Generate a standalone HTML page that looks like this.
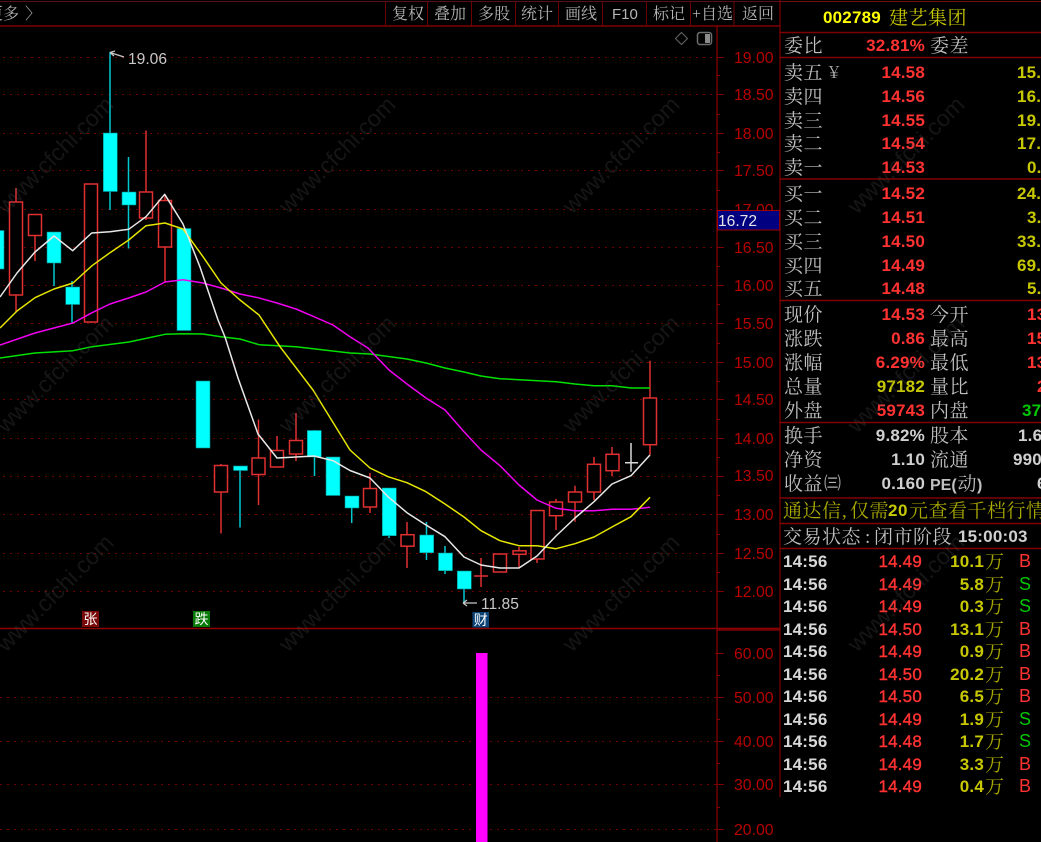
<!DOCTYPE html>
<html lang="zh"><head><meta charset="utf-8"><title>建艺集团</title>
<style>
html,body{margin:0;padding:0;background:#000;width:1041px;height:842px;overflow:hidden}
svg{display:block}
text{white-space:pre}
.c{font-family:"Liberation Serif","Noto Serif CJK SC",serif;font-size:19px;fill:#c0c0c0;letter-spacing:.5px}
.t{font-family:"Liberation Serif","Noto Serif CJK SC",serif;font-size:16px;fill:#b4b4b4}
.n{font-family:"Liberation Sans",sans-serif;font-size:17px;font-weight:bold;letter-spacing:.2px}
.r{fill:#ff3232;text-anchor:end}
.y{fill:#c8c800}
.w{fill:#d0d0d0}
.g{fill:#00c800}
.a{font-family:"Liberation Sans",sans-serif;font-size:15.8px;fill:#b80000}
.l{font-family:"Liberation Sans",sans-serif;font-size:15.6px;fill:#c8c8c8}
.m{font-family:"Noto Sans CJK SC",sans-serif;font-size:14px;fill:#fff;text-anchor:middle}
.wm{font-family:"Liberation Sans",sans-serif;font-size:23.3px;fill:#5a5a5a;opacity:.24}
.h{stroke:#700000;stroke-width:1;stroke-dasharray:2 5;fill:none}
.ln{stroke:#800000;stroke-width:1;fill:none}
.rw{stroke:#e03030;stroke-width:1.5;fill:none}
.rb{stroke:#e03030;stroke-width:1.5;fill:#000}
.cw{stroke:#00c8d0;stroke-width:1.5;fill:none}
.cb{fill:#0ff;stroke:#008b8b;stroke-width:.6}
.ma{fill:none;stroke-width:1.5;stroke-linejoin:round}
</style></head><body>
<svg width="1041" height="842" viewBox="0 0 1041 842" xmlns="http://www.w3.org/2000/svg">
<rect width="1041" height="842" fill="#000"/>

<!-- grid -->
<path class="h" d="M3 57.5H715M3 94.5H715M3 133.5H715M3 170.5H715M3 209.5H715M3 247.5H715M3 285.5H715M3 323.5H715M3 362.5H715M3 399.5H715M3 438.5H715M3 476.5H715M3 514.5H715M3 553.5H715M3 591.5H715M0 697.5H715M0 741.5H715M0 784.5H715M0 829.5H715"/>

<!-- frame lines -->
<path d="M0 1.5H780" stroke="#5a1010" stroke-width="1"/>
<path d="M0 26H780" stroke="#800000" stroke-width="1.6"/>
<path d="M0 628.5H780" stroke="#900000" stroke-width="1.4"/>
<path d="M717 26V842M717.5 630H780" stroke="#900000" stroke-width="1.2" fill="none"/>
<path d="M385.5 2V26M427.5 2V26M471.5 2V26M515.5 2V26M558.5 2V26M602.5 2V26M646.5 2V26M690.5 2V26M734 2V26" stroke="#700000" stroke-width="1"/>
<!-- axis ticks -->
<path class="ln" d="M717 57.5h7M717 94.5h7M717 133.5h7M717 170.5h7M717 247.5h7M717 285.5h7M717 323.5h7M717 362.5h7M717 399.5h7M717 438.5h7M717 476.5h7M717 514.5h7M717 553.5h7M717 591.5h7M717 75.5h3M717 114.5h3M717 152.5h3M717 190.5h3M717 266.5h3M717 304.5h3M717 343.5h3M717 381.5h3M717 419.5h3M717 457.5h3M717 495.5h3M717 534.5h3M717 572.5h3M717 653.5h7M717 697.5h7M717 741.5h7M717 784.5h7M717 829.5h7M717 675.5h3M717 719.5h3M717 763.5h3M717 807.5h3M715 653.5h2M715 697.5h2M715 741.5h2M715 784.5h2M715 829.5h2"/>
<!-- axis labels -->
<g class="a">
<text x="734" y="63">19.00</text><text x="734" y="100">18.50</text><text x="734" y="139">18.00</text><text x="734" y="176">17.50</text><text x="734" y="215">17.00</text><text x="734" y="253">16.50</text><text x="734" y="291">16.00</text><text x="734" y="329">15.50</text><text x="734" y="368">15.00</text><text x="734" y="405">14.50</text><text x="734" y="444">14.00</text><text x="734" y="481">13.50</text><text x="734" y="520">13.00</text><text x="734" y="559">12.50</text><text x="734" y="597">12.00</text>
<text x="734" y="659">60.00</text><text x="734" y="703">50.00</text><text x="734" y="747">40.00</text><text x="734" y="790">30.00</text><text x="734" y="835">20.00</text>
</g>
<rect x="717.5" y="210.5" width="62" height="19.5" fill="#000080" stroke="#a00000" stroke-width="1"/>
<text x="718" y="226" font-family="Liberation Sans" font-size="15.6" fill="#e6e6e6">16.72</text>

<!-- toolbar -->
<g class="t">
<text x="392" y="19">复权</text><text x="434" y="19">叠加</text><text x="478" y="19">多股</text><text x="521" y="19">统计</text><text x="565" y="19">画线</text>
<text x="612" y="19" font-family="Liberation Sans" font-size="15">F10</text>
<text x="653" y="19">标记</text><text x="692" y="19">+自选</text><text x="742" y="19">返回</text>
<text x="-13" y="19">更多</text><text x="25" y="19">〉</text>
</g>
<!-- icons -->
<path d="M681.5 32.5l6 6-6 6-6-6z" fill="none" stroke="#5c5c5c" stroke-width="1.2"/>
<rect x="697.5" y="32.5" width="14" height="12" rx="2.5" fill="none" stroke="#6e6e6e" stroke-width="1.5"/>
<rect x="705" y="34" width="5" height="9" fill="#8c8c8c"/>

<!-- wicks -->
<path class="rw" d="M16 188V312M35 235V261M91 184V323M146 130.5V220M165 195V282M221 464V533.5M258.5 419.5V505M277 436V467M296 413V461M370 473V513M407 522V568M481 558V587M474 576H488M519 547V568M537 510V563M556 499V530M575 485.7V521.7M594 457V500M612 447V476M650 360.7V455"/>
<path class="cw" d="M54 263V286M72 281V323M110 52V210M128.5 157V248.5M240 466V527.5M314.5 430V476M351.7 508V523M389 535V538M426.5 522V560M445 546V574M464 589V603"/>
<path d="M631 443V471.7M625 462.7H638" stroke="#d8d8d8" stroke-width="1.5" fill="none"/>
<!-- red bodies -->
<g class="rb">
<rect x="9.5" y="202" width="13" height="93"/>
<rect x="28.5" y="214.5" width="13" height="21"/>
<rect x="84.5" y="184" width="13" height="138"/>
<rect x="139.5" y="192" width="13" height="26"/>
<rect x="158.5" y="200.5" width="13" height="46.5"/>
<rect x="214.5" y="465.5" width="13" height="26.5"/>
<rect x="252" y="458" width="13" height="16.5"/>
<rect x="270.5" y="450.5" width="13" height="16.5"/>
<rect x="289.5" y="440.5" width="13" height="13.5"/>
<rect x="363.5" y="488.5" width="13" height="18.5"/>
<rect x="401" y="534.7" width="13" height="11.5"/>
<rect x="493.5" y="554" width="13" height="18"/>
<rect x="513" y="550.8" width="13" height="3.5"/>
<rect x="531" y="510.5" width="13" height="48.5"/>
<rect x="549.5" y="502" width="13" height="13.7"/>
<rect x="568.5" y="492" width="13" height="10"/>
<rect x="587.5" y="464.3" width="13" height="27.7"/>
<rect x="606" y="454.3" width="13" height="16.4"/>
<rect x="643.5" y="398" width="13" height="46.7"/>
</g>
<!-- cyan bodies -->
<g class="cb">
<rect x="-10" y="230.5" width="14" height="38.5"/>
<rect x="47" y="232" width="14" height="31"/>
<rect x="65.7" y="287" width="14" height="17.5"/>
<rect x="103.3" y="133" width="14" height="58.5"/>
<rect x="122" y="192" width="14" height="13"/>
<rect x="177" y="228.5" width="14" height="102"/>
<rect x="196" y="381" width="14" height="67"/>
<rect x="233.5" y="466" width="14" height="4.5"/>
<rect x="307.3" y="430.5" width="14" height="26.5"/>
<rect x="326" y="457" width="14" height="38.5"/>
<rect x="345" y="496" width="14" height="12"/>
<rect x="382.3" y="488" width="14" height="47.7"/>
<rect x="419.7" y="535" width="14" height="17.7"/>
<rect x="438.5" y="553" width="14" height="17.7"/>
<rect x="457.3" y="571" width="14" height="18"/>
</g>

<!-- moving averages -->
<polyline class="ma" stroke="#00e000" points="0,358 35,353 73,350.7 92,346.7 129,342 165,334.3 183,333.7 203,334 221,336.7 240,339 259,344.7 296,346.7 350,353 370,354 407,359 426,363 445,368 464,372 481,376 500,378.7 519,379.7 556,381.7 575,384 594,385.7 612,385.7 631,388 650,388"/>
<polyline class="ma" stroke="#f000f0" points="0,345 35,333 73,323 92,312.7 110,304 128.7,298 146,292 165,282 183,279.7 203,283 221,288 240,294 258,297.7 277,303 296,309 314,316.7 333,325 350,336.7 368,348 389,370 407,384 426,398 445,410 464,431.7 481,450 500,465.7 519,485 537,500 556,508.3 575,510.7 594,510.7 612,509.3 631,509.3 650,507.3"/>
<polyline class="ma" stroke="#e6e600" points="0,328 17,311 35,297.7 54,289 73,283 92,265.7 110,252.7 128.7,240 146,225.7 165,223 183,229 203,256.7 221,283 240,300 259,315 280,346.7 313,390 350,450 370,468 388,476.7 407,482.7 426,491.7 445,504 464,517 481,530.7 500,540.7 519,545.7 537,545.7 556,548.7 575,543.7 594,537 612,527 631,516.7 650,497.3"/>
<polyline class="ma" stroke="#e8e8e8" points="0,297 17,273 35,252 54,236 72.7,250.7 91.7,233 110,231.7 128.7,229.3 146,216.7 164.7,194.3 183,224 200,267 218,320 225,337 238,378 258,434 277,458 296,457 314,456 333,460.7 350,470.5 370,478 388,496.7 407,512.7 426,525 445,536.7 464,557 481,565 500,568 519,568 537,556 556,536 575,518 594,501.7 612,484 631,475.7 650,455"/>

<!-- high/low annotations -->
<path d="M124 57L110 52.5M110 52.5l5 -1.5M110 52.5l4 3.5" stroke="#c8c8c8" stroke-width="1.2" fill="none"/>
<text class="l" x="128" y="64">19.06</text>
<path d="M477 603H463M463 603l4 -3M463 603l4 3" stroke="#c8c8c8" stroke-width="1.2" fill="none"/>
<text class="l" x="481" y="609">11.85</text>

<!-- event marks -->
<rect x="82" y="611" width="17" height="16" fill="#7a0a0a"/><text class="m" x="90.5" y="624">张</text>
<rect x="193" y="611" width="17" height="16" fill="#067a06"/><text class="m" x="201.5" y="624">跌</text>
<rect x="472.5" y="612" width="16.5" height="15.5" fill="#0c4478"/><text class="m" x="480.7" y="625">财</text>

<!-- volume bar -->
<rect x="476" y="653" width="11.5" height="189" fill="#f0f"/>

<!-- right panel -->
<rect x="781" y="0" width="260" height="842" fill="#000"/>
<path d="M780 0V797" stroke="#800000" stroke-width="1.2"/>
<path d="M780 1.5H1041" stroke="#701010" stroke-width="1"/>
<path d="M780 32.5H1041M780 57.5H1041M780 179H1041M780 300.5H1041M780 422.5H1041M780 498H1041M780 523.5H1041M780 548.5H1041" stroke="#800000" stroke-width="1.5"/>

<text class="n" x="823" y="23" fill="#ffff00">002789</text>
<text class="c" x="889" y="24" style="fill:#c8c800">建艺集团</text>

<g class="c">
<text x="784" y="52">委比</text><text x="930" y="52">委差</text>
<text x="784" y="79">卖五</text><text x="784" y="103">卖四</text><text x="784" y="127">卖三</text><text x="784" y="150">卖二</text><text x="784" y="174">卖一</text>
<text x="784" y="200">买一</text><text x="784" y="224">买二</text><text x="784" y="248">买三</text><text x="784" y="272">买四</text><text x="784" y="295">买五</text>
<text x="784" y="321">现价</text><text x="930" y="321">今开</text>
<text x="784" y="345">涨跌</text><text x="930" y="345">最高</text>
<text x="784" y="369">涨幅</text><text x="930" y="369">最低</text>
<text x="784" y="393">总量</text><text x="930" y="393">量比</text>
<text x="784" y="417">外盘</text><text x="930" y="417">内盘</text>
<text x="784" y="442">换手</text><text x="930" y="442">股本</text>
<text x="784" y="466">净资</text><text x="930" y="466">流通</text>
<text x="784" y="490">收益</text>
<text x="930" y="490" font-family="Liberation Sans" font-weight="bold" font-size="16" letter-spacing="0">PE(</text><text x="957.5" y="490">动</text><text x="977" y="490" font-family="Liberation Sans" font-weight="bold" font-size="16">)</text>
</g>
<text x="826" y="78" font-family="Noto Serif CJK SC" font-size="16" fill="#b8b8b8">￥</text>
<text x="824" y="489" font-family="Noto Sans CJK SC" font-size="17" fill="#b0b0b0">㈢</text>

<g class="n">
<text class="r" x="925" y="51">32.81%</text>
<text class="r" x="925" y="78">14.58</text><text class="r" x="925" y="102">14.56</text><text class="r" x="925" y="126">14.55</text><text class="r" x="925" y="149">14.54</text><text class="r" x="925" y="173">14.53</text>
<text class="r" x="925" y="199">14.52</text><text class="r" x="925" y="223">14.51</text><text class="r" x="925" y="247">14.50</text><text class="r" x="925" y="271">14.49</text><text class="r" x="925" y="294">14.48</text>
<text class="r" x="925" y="320">14.53</text><text class="r" x="925" y="344">0.86</text><text class="r" x="925" y="368">6.29%</text>
<text class="y" x="925" y="392" text-anchor="end">97182</text><text class="r" x="925" y="416">59743</text>
<text class="w" x="925" y="441" text-anchor="end">9.82%</text><text class="w" x="925" y="465" text-anchor="end">1.10</text><text class="w" x="925" y="489" text-anchor="end">0.160</text>

<g class="y">
<text x="1017" y="78">15.</text><text x="1017" y="102">16.</text><text x="1017" y="126">19.</text><text x="1017" y="149">17.</text><text x="1027" y="173">0.</text>
<text x="1017" y="199">24.</text><text x="1027" y="223">3.</text><text x="1017" y="247">33.</text><text x="1017" y="271">69.</text><text x="1027" y="294">5.</text>
</g>
<g fill="#ff3232"><text x="1027" y="320">13</text><text x="1027" y="344">15</text><text x="1027" y="368">13</text><text x="1037" y="392">2</text></g>
<text class="g" x="1022" y="416">37</text>
<g class="w"><text x="1018" y="441">1.6</text><text x="1013" y="465">990</text><text x="1037" y="489">6</text></g>
</g>

<!-- promo line -->
<g class="c" style="fill:#a8a800">
<text x="783" y="517">通达信</text><text x="842" y="517">,</text><text x="850" y="517">仅需</text>
<text x="888" y="516" font-family="Liberation Sans" font-weight="bold" font-size="17" style="fill:#c8c800">20</text>
<text x="909" y="517">元查看千档行情</text>
</g>
<!-- status line -->
<g class="c">
<text x="783" y="543">交易状态</text><text x="865" y="543">:</text><text x="874" y="543">闭市阶段</text>
</g>
<text class="n w" x="958" y="542" letter-spacing=".5">15:00:03</text>

<!-- ticks -->
<g class="n">
<g fill="#d8d8d8">
<text x="783" y="567">14:56</text><text x="783" y="590">14:56</text><text x="783" y="612">14:56</text><text x="783" y="635">14:56</text><text x="783" y="657">14:56</text><text x="783" y="680">14:56</text><text x="783" y="702">14:56</text><text x="783" y="725">14:56</text><text x="783" y="747">14:56</text><text x="783" y="770">14:56</text><text x="783" y="792">14:56</text>
</g>
<g fill="#ff3232" text-anchor="end" font-weight="normal" stroke="#ff3232" stroke-width=".4">
<text x="922" y="567">14.49</text><text x="922" y="590">14.49</text><text x="922" y="612">14.49</text><text x="922" y="635">14.50</text><text x="922" y="657">14.49</text><text x="922" y="680">14.50</text><text x="922" y="702">14.50</text><text x="922" y="725">14.49</text><text x="922" y="747">14.48</text><text x="922" y="770">14.49</text><text x="922" y="792">14.49</text>
</g>
<g fill="#c8c800" text-anchor="end">
<text x="984" y="567">10.1</text><text x="984" y="590">5.8</text><text x="984" y="612">0.3</text><text x="984" y="635">13.1</text><text x="984" y="657">0.9</text><text x="984" y="680">20.2</text><text x="984" y="702">6.5</text><text x="984" y="725">1.9</text><text x="984" y="747">1.7</text><text x="984" y="770">3.3</text><text x="984" y="792">0.4</text>
</g>
<g font-weight="normal" font-size="18">
<text x="1019" y="567" fill="#ff3232">B</text><text x="1019" y="590" fill="#00c800">S</text><text x="1019" y="612" fill="#00c800">S</text><text x="1019" y="635" fill="#ff3232">B</text><text x="1019" y="657" fill="#ff3232">B</text><text x="1019" y="680" fill="#ff3232">B</text><text x="1019" y="702" fill="#ff3232">B</text><text x="1019" y="725" fill="#00c800">S</text><text x="1019" y="747" fill="#00c800">S</text><text x="1019" y="770" fill="#ff3232">B</text><text x="1019" y="792" fill="#ff3232">B</text>
</g>
</g>
<g class="c" style="fill:#a8a800">
<text x="985" y="568">万</text><text x="985" y="591">万</text><text x="985" y="613">万</text><text x="985" y="636">万</text><text x="985" y="658">万</text><text x="985" y="681">万</text><text x="985" y="703">万</text><text x="985" y="726">万</text><text x="985" y="748">万</text><text x="985" y="771">万</text><text x="985" y="793">万</text>
</g>

<!-- watermarks -->
<g class="wm">
<text transform="translate(6 215) rotate(-45)">www.cfchi.com</text>
<text transform="translate(288 215) rotate(-45)">www.cfchi.com</text>
<text transform="translate(572 215) rotate(-45)">www.cfchi.com</text>
<text transform="translate(857 215) rotate(-45)">www.cfchi.com</text>
<text transform="translate(6 434) rotate(-45)">www.cfchi.com</text>
<text transform="translate(288 434) rotate(-45)">www.cfchi.com</text>
<text transform="translate(572 434) rotate(-45)">www.cfchi.com</text>
<text transform="translate(857 434) rotate(-45)">www.cfchi.com</text>
<text transform="translate(6 653) rotate(-45)">www.cfchi.com</text>
<text transform="translate(288 653) rotate(-45)">www.cfchi.com</text>
<text transform="translate(572 653) rotate(-45)">www.cfchi.com</text>
<text transform="translate(857 653) rotate(-45)">www.cfchi.com</text>
</g>
</svg>
</body></html>
